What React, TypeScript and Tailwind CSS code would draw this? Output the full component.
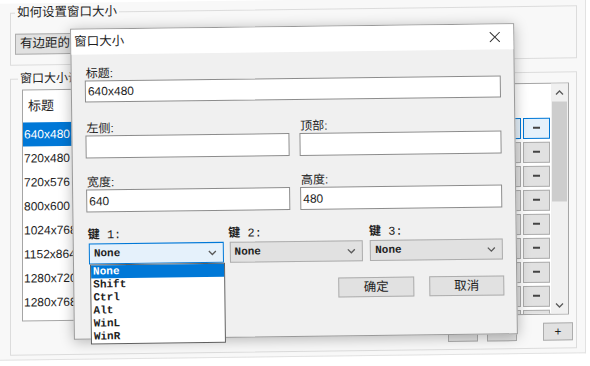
import clsx from "clsx"

const sizes = ["640x480", "720x480", "720x576", "800x600", "1024x768", "1152x864", "1280x720", "1280x768", ""]
const keys = ["None", "Shift", "Ctrl", "Alt", "WinL", "WinR"]

function Chevron({ up = false }: { up?: boolean }) {
  return (
    <svg width="9" height="6" viewBox="0 0 9 6" className="text-[#5a5a5a]">
      <polyline
        points={up ? "1,5 4.5,1.5 8,5" : "1,1 4.5,4.5 8,1"}
        fill="none"
        stroke="currentColor"
        strokeWidth="1.3"
      />
    </svg>
  )
}

function Combo({ focused = false, className = "" }: { focused?: boolean; className?: string }) {
  return (
    <div
      className={clsx(
        "h-[21px] border flex items-center pl-[4px] pr-[6px] font-['Liberation_Mono',monospace] text-[11px] font-bold text-[#222]",
        focused ? "border-[#0078d7] bg-[#e5f1fb]" : "border-[#adadad] bg-[#e1e1e1]",
        className
      )}
    >
      <span className="flex-1">None</span>
      <Chevron />
    </div>
  )
}

function Field({ label, value = "" }: { label: string; value?: string }) {
  return (
    <div className="flex flex-col">
      <div className="h-[14px] leading-[14px] pl-[1px]">{label}</div>
      <div className="h-[23px] border border-[#8c8c8c] bg-white flex items-center pl-[2px]">{value}</div>
    </div>
  )
}

export default function App() {
  return (
    <div className="relative w-[590px] h-[366px] overflow-hidden bg-white font-['Liberation_Sans','Noto_Sans_CJK_SC',sans-serif] text-[12px] text-[#1e1e1e]">
      {/* main window, slightly skewed like the photographed screen */}
      <div className="w-[586px] h-[357px] bg-[#f8f8f8] border-r border-b border-[#e2e2e2] pt-[1px] pl-[10px] skew-y-[-0.75deg]">
        <fieldset className="w-[567px] h-[61px] border border-[#dcdcdc] pl-[4px]">
          <legend className="px-[2px] leading-[16px] text-[12.5px]">如何设置窗口大小</legend>
          <div className="mt-[13px] w-[220px] h-[21px] border border-[#adadad] bg-[#e1e1e1] pl-[4px] flex items-center text-[12.5px]">
            有边距的
          </div>
        </fieldset>

        <fieldset className="mt-[5px] w-[567px] h-[285px] border border-[#dcdcdc] pl-[11px]">
          <legend className="ml-[-4px] px-[2px] leading-[16px] text-[12px]">窗口大小设</legend>

          <div className="mt-[3px] w-[547px] h-[232px] border border-[#a5a5a5] bg-white flex">
            <div className="flex-1 flex flex-col overflow-hidden">
              <div className="h-[32px] shrink-0 flex items-center pl-[5px] text-[13px]">标题</div>
              {sizes.map((s, i) => (
                <div key={i} className="h-[24px] shrink-0 flex items-center pr-[1px]">
                  <div
                    className={clsx(
                      "w-[180px] h-full flex items-center pl-[1px]",
                      i === 0 && "bg-[#0078d7] text-white"
                    )}
                  >
                    {s}
                  </div>
                  <div className="flex-1" />
                  <div
                    className={clsx(
                      "w-[31px] h-[21px] border",
                      i === 0 ? "border-[#0078d7] bg-[#e5f1fb]" : "border-[#adadad] bg-[#e1e1e1]"
                    )}
                  />
                  <div
                    className={clsx(
                      "ml-[2px] w-[27px] h-[21px] border flex items-center justify-center",
                      i === 0 ? "border-[#0078d7] bg-[#e5f1fb]" : "border-[#adadad] bg-[#e1e1e1]"
                    )}
                  >
                    <div className="w-[7px] h-[2px] bg-[#444]" />
                  </div>
                </div>
              ))}
            </div>
            <div className="w-[17px] bg-[#f0f0f0] flex flex-col">
              <div className="h-[17px] flex items-center justify-center">
                <Chevron up />
              </div>
              <div className="mt-[1px] mx-[1px] h-[100px] bg-[#cdcdcd]" />
              <div className="flex-1" />
              <div className="h-[17px] flex items-center justify-center">
                <Chevron />
              </div>
            </div>
          </div>

          <div className="mt-[8px] h-[18px] flex">
            <div className="ml-[426px] w-[30px] border border-[#adadad] bg-[#e1e1e1]" />
            <div className="ml-[9px] w-[30px] border border-[#adadad] bg-[#e1e1e1]" />
            <div className="ml-[26px] w-[30px] border border-[#adadad] bg-[#e1e1e1] flex items-center justify-center text-[12px] leading-none">
              +
            </div>
          </div>
        </fieldset>
      </div>

      {/* dialog over the main window */}
      <div className="absolute left-[72px] top-[26px] w-[444px] h-[311px] border border-[#999] bg-[#f0f0f0] shadow-[0_2px_14px_rgba(0,0,0,0.28)] flex flex-col rotate-[-0.7deg]">
        <div className="h-[25px] shrink-0 bg-white flex items-center pl-[3px] pr-[4px]">
          <span className="flex-1 text-[12.5px]">窗口大小</span>
          <div className="w-[30px] h-full flex items-center justify-center">
            <svg width="11" height="11" viewBox="0 0 11 11">
              <path d="M0.5 0.5 L10.5 10.5 M10.5 0.5 L0.5 10.5" stroke="#333" strokeWidth="1" />
            </svg>
          </div>
        </div>

        <div className="flex-1 px-[13px] flex flex-col">
          <div className="mt-[12px] h-[14px] leading-[14px] pl-[1px]">标题:</div>
          <div className="h-[22px] border border-[#8c8c8c] bg-white flex items-center pl-[2px]">640x480</div>

          <div className="mt-[19px] grid grid-cols-[204px_202px] gap-x-[10px] gap-y-[17px]">
            <Field label="左侧:" />
            <Field label="顶部:" />
            <Field label="宽度:" value="640" />
            <Field label="高度:" value="480" />
          </div>

          <div className="mt-[16px] flex font-['Liberation_Mono','Noto_Sans_CJK_SC',monospace] text-[12px]">
            <div className="ml-[2px] w-[135px] flex flex-col">
              <div className="h-[14px] leading-[14px] ml-[-1px]">
                <span className="font-bold">键</span> 1:
              </div>
              <div className="relative mt-[1px]">
                <Combo focused />
                <div className="absolute top-full left-[1px] w-[135px] border border-[#5f5f5f] bg-white z-10">
                  {keys.map((k, i) => (
                    <div
                      key={k}
                      className={clsx(
                        "h-[13px] leading-[13px] pl-[2px] text-[11px] font-bold",
                        i === 0 ? "bg-[#0078d7] text-white" : "text-[#222]"
                      )}
                    >
                      {k}
                    </div>
                  ))}
                </div>
              </div>
            </div>
            <div className="ml-[6px] w-[134px] flex flex-col">
              <div className="h-[14px] leading-[14px] ml-[-1px]">
                <span className="font-bold">键</span> 2:
              </div>
              <Combo className="mt-[1px]" />
            </div>
            <div className="ml-[7px] w-[133px] flex flex-col">
              <div className="h-[14px] leading-[14px] ml-[-1px]">
                <span className="font-bold">键</span> 3:
              </div>
              <Combo className="mt-[1px]" />
            </div>
          </div>

          <div className="mt-[16px] mr-[-1px] flex justify-end gap-[15px] text-[12.5px]">
            <div className="w-[76px] h-[20px] border border-[#adadad] bg-[#e1e1e1] flex items-center justify-center">确定</div>
            <div className="w-[75px] h-[20px] border border-[#adadad] bg-[#e1e1e1] flex items-center justify-center">取消</div>
          </div>
        </div>
      </div>
    </div>
  )
}
